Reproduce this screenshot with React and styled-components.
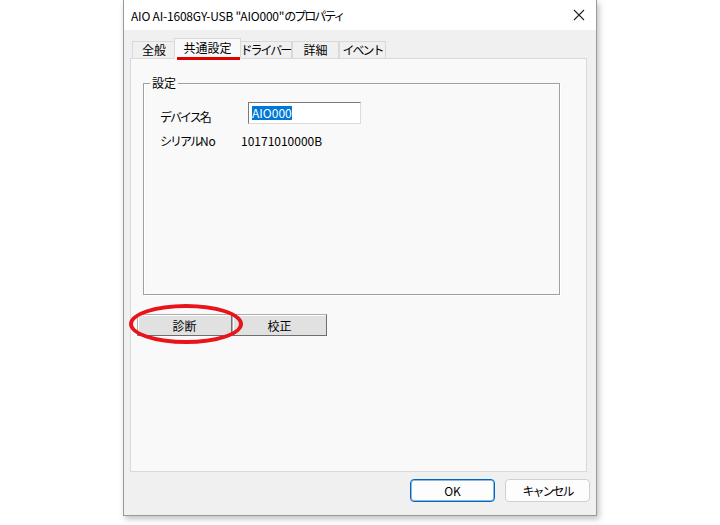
import React from "react";
import styled, { createGlobalStyle } from "styled-components";

const GlobalStyle = createGlobalStyle`
  body {
    margin: 0;
    background: #ffffff;
    font-family: "Noto Sans CJK JP", "Noto Sans", sans-serif;
    font-size: 12px;
    color: #000;
  }
`;

const tabs = [
  { label: "全般", width: 44, narrow: false },
  { label: "共通設定", width: 67, narrow: false },
  { label: "ドライバー", width: 53, narrow: true },
  { label: "詳細", width: 47, narrow: false },
  { label: "イベント", width: 47, narrow: true },
];

const App = () => {
  return (
    <>
      <GlobalStyle />
      <Page>
        <Window>
          <TitleBar>
            <Title>
              AIO AI-1608GY-USB "AIO000"<Kana>のプロパティ</Kana>
            </Title>
            <CloseButton>
              <svg width="12" height="12" viewBox="0 0 12 12">
                <path d="M1 1 L11 11 M11 1 L1 11" stroke="#222" strokeWidth="1.1" />
              </svg>
            </CloseButton>
          </TitleBar>
          <Body>
            <TabStrip>
              {tabs.map((t, i) => (
                <Tab key={t.label} $active={i === 1} $narrow={t.narrow} style={{ width: t.width }}>
                  {t.label}
                  {i === 1 && <Underline />}
                </Tab>
              ))}
            </TabStrip>
            <TabPanel>
              <GroupBox>
                <GroupLabel>設定</GroupLabel>
                <FieldRow>
                  <FieldLabel>
                    <Kana>デバイス</Kana>名
                  </FieldLabel>
                  <TextBox>
                    <Selected>AIO000</Selected>
                  </TextBox>
                </FieldRow>
                <InfoRow>
                  <FieldLabel $w={81}>
                    <Kana>シリアル</Kana>No
                  </FieldLabel>
                  <span>10171010000B</span>
                </InfoRow>
              </GroupBox>
              <ButtonRow>
                <ClassicButton>診断</ClassicButton>
                <ClassicButton>校正</ClassicButton>
                <Ellipse />
              </ButtonRow>
            </TabPanel>
            <Footer>
              <ModernButton $primary>OK</ModernButton>
              <ModernButton>
                <Kana>キャンセル</Kana>
              </ModernButton>
            </Footer>
          </Body>
        </Window>
      </Page>
    </>
  );
};

const Page = styled.div`
  width: 720px;
  height: 525px;
  padding-left: 123px;
  box-sizing: border-box;
`;

const Window = styled.div`
  width: 474px;
  height: 516px;
  box-sizing: border-box;
  border: 1px solid #9a9a9a;
  border-top: none;
  display: flex;
  flex-direction: column;
  box-shadow: 2px 3px 6px rgba(0, 0, 0, 0.25);
  background: #f0f0f0;
`;

const TitleBar = styled.div`
  height: 30px;
  background: #ffffff;
  display: flex;
  align-items: center;
  justify-content: space-between;
  padding: 0 7px 0 7px;
`;

const Title = styled.span`
  font-size: 12px;
  letter-spacing: -0.2px;
  color: #000;
`;

const Kana = styled.span`
  letter-spacing: -2px;
`;

const CloseButton = styled.div`
  width: 20px;
  display: flex;
  justify-content: center;
  align-items: center;
`;

const Body = styled.div`
  flex: 1;
  display: flex;
  flex-direction: column;
  padding: 8px 9px 8px 6px;
`;

const TabStrip = styled.div`
  display: flex;
  align-items: flex-end;
  height: 21px;
  padding-left: 2px;
  position: relative;
  z-index: 1;
  margin-bottom: -1px;
`;

const Tab = styled.div`
  position: relative;
  box-sizing: border-box;
  height: ${(p) => (p.$active ? "21px" : "18px")};
  display: flex;
  align-items: center;
  justify-content: center;
  white-space: nowrap;
  letter-spacing: ${(p) => (p.$narrow ? "-2px" : "0")};
  background: ${(p) => (p.$active ? "#f9f9f9" : "#f0f0f0")};
  border: 1px solid #d9d9d9;
  border-bottom: ${(p) => (p.$active ? "1px solid #f9f9f9" : "1px solid #d9d9d9")};
  margin: ${(p) => (p.$active ? "0 -2px" : "0")};
  z-index: ${(p) => (p.$active ? 2 : 0)};
  padding-bottom: 2px;
  font-size: 12px;
`;

const Underline = styled.div`
  position: absolute;
  left: 2px;
  right: 0;
  bottom: -2px;
  height: 3px;
  background: #e00000;
`;

const TabPanel = styled.div`
  position: relative;
  height: 414px;
  box-sizing: border-box;
  background: #f9f9f9;
  border: 1px solid #d9d9d9;
  padding: 24px 26px 0 12px;
`;

const GroupBox = styled.div`
  position: relative;
  height: 212px;
  box-sizing: border-box;
  border: 1px solid #a0a0a0;
  box-shadow: 1px 1px 0 #ffffff, inset 1px 1px 0 #ffffff;
  padding: 18px 0 0 16px;
`;

const GroupLabel = styled.span`
  position: absolute;
  top: -10px;
  left: 6px;
  padding: 0 2px;
  background: #f9f9f9;
  font-size: 12px;
`;

const FieldRow = styled.div`
  display: flex;
  align-items: center;
  height: 22px;
`;

const FieldLabel = styled.span`
  width: ${(p) => p.$w || 88}px;
  flex-shrink: 0;
  white-space: nowrap;
  padding-top: ${(p) => (p.$w ? 0 : 6)}px;
`;

const TextBox = styled.div`
  width: 113px;
  height: 22px;
  box-sizing: border-box;
  background: #ffffff;
  border: 1px solid #7a7a7a;
  border-right-color: #dcdcdc;
  border-bottom-color: #dcdcdc;
  display: flex;
  align-items: center;
  padding-left: 3px;
`;

const Selected = styled.span`
  background: #0078d7;
  color: #ffffff;
  line-height: 14px;
`;

const InfoRow = styled.div`
  display: flex;
  align-items: center;
  margin-top: 8px;
`;

const ButtonRow = styled.div`
  position: relative;
  display: flex;
  margin-top: 19px;
  margin-left: -6px;
`;

const ClassicButton = styled.div`
  width: 95px;
  height: 22px;
  box-sizing: border-box;
  background: #e1e1e1;
  border: 1px solid #adadad;
  border-right-color: #6e6e6e;
  border-bottom-color: #6e6e6e;
  box-shadow: inset 1px 1px 0 #ffffff;
  display: flex;
  align-items: center;
  justify-content: center;
  font-size: 12px;
`;

const Ellipse = styled.div`
  position: absolute;
  left: -8px;
  top: -10px;
  width: 114px;
  height: 40px;
  box-sizing: border-box;
  border: 4px solid #e8141a;
  border-radius: 50%;
`;

const Footer = styled.div`
  flex: 1;
  display: flex;
  justify-content: flex-end;
  align-items: center;
  gap: 10px;
  padding-top: 1px;
  margin-right: -3px;
`;

const ModernButton = styled.div`
  width: 85px;
  height: 23px;
  box-sizing: border-box;
  border-radius: 4px;
  background: #fdfdfd;
  border: 1px solid ${(p) => (p.$primary ? "#0067c0" : "#d0d0d0")};
  box-shadow: ${(p) => (p.$primary ? "inset 0 0 0 1px #8fb8e0" : "none")};
  display: flex;
  align-items: center;
  justify-content: center;
  font-size: 12px;
`;

export default App;
